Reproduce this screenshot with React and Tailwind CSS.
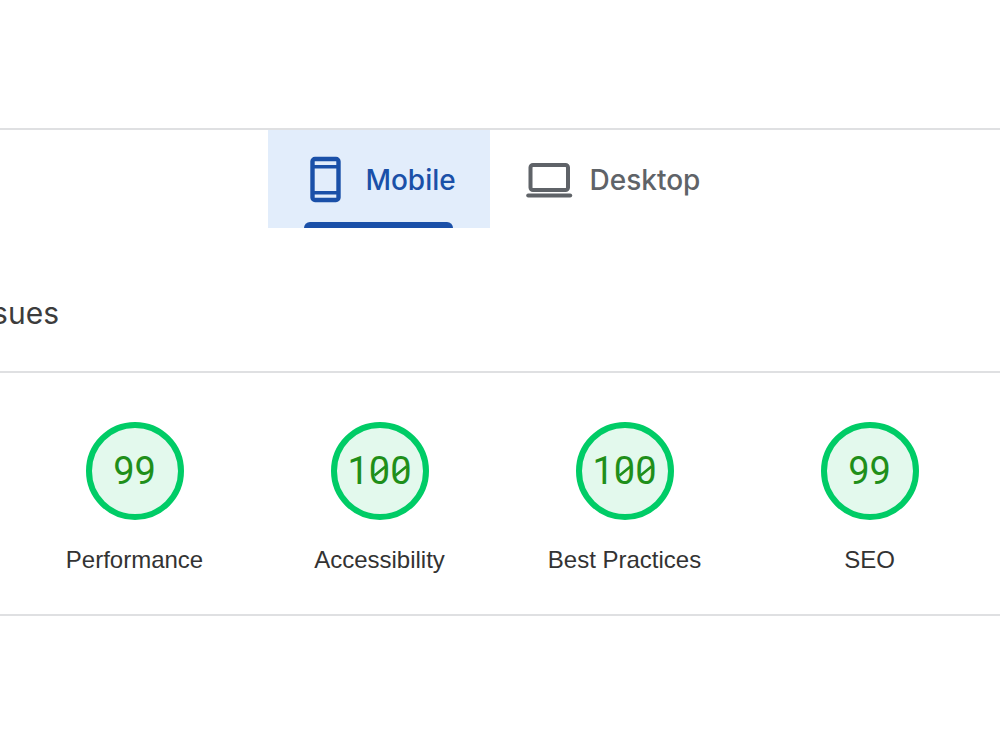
const scores = [
  { label: 'Performance', value: 99 },
  { label: 'Accessibility', value: 100 },
  { label: 'Best Practices', value: 100 },
  { label: 'SEO', value: 99 },
];

function PhoneIcon() {
  return (
    <svg className="h-12 w-8" viewBox="0 0 32 48" fill="none" stroke="currentColor" strokeWidth="4.4" aria-hidden="true">
      <rect x="3.5" y="3" width="26" height="41" rx="2.5" />
      <path d="M3.5 10.8h26M3.5 36.8h26" strokeWidth="3.6" />
    </svg>
  );
}

function LaptopIcon() {
  return (
    <svg className="h-12 w-12" viewBox="0 0 48 48" fill="none" stroke="currentColor" strokeWidth="4" aria-hidden="true">
      <rect x="4.5" y="9" width="37.5" height="25" rx="2.5" />
      <path d="M2.2 39.4h42" strokeWidth="4" strokeLinecap="round" />
    </svg>
  );
}

/* Strokes through the two zeros of a full score */
function ZeroSlashes() {
  return (
    <svg className="absolute inset-0 size-full" viewBox="0 0 86 86" fill="none" stroke="currentColor" strokeWidth="2.6" aria-hidden="true">
      <path d="M37.5 47.5 48.5 38.5M58.5 47.5 69.5 38.5" />
    </svg>
  );
}

function Gauge({ label, value }) {
  return (
    <a href={'#' + label} className="flex flex-col items-center gap-6">
      <span className="relative flex size-[98px] items-center justify-center rounded-full border-6 border-[#00cc66] bg-[#e3f9ed] font-['Roboto',sans-serif] text-[38px] text-[#1f8f1a]">
        {value}
        {value === 100 && <ZeroSlashes />}
      </span>
      <span className="font-['Liberation_Sans',sans-serif] text-2xl text-[#333]">{label}</span>
    </a>
  );
}

export default function App() {
  return (
    <main className="overflow-hidden bg-white pt-32 font-['Inter',sans-serif]">
      <div role="tablist" className="flex justify-center border-t-2 border-[#dfe0e2] pr-8">
        <button role="tab" aria-selected="true" className="flex w-[222px] flex-col items-center bg-[#e2edfb] text-[#1a50a8]">
          <span className="flex h-[92px] items-center gap-6 pt-2 pl-2">
            <PhoneIcon />
            <span className="text-[28px] font-medium">Mobile</span>
          </span>
          <span className="h-1.5 w-[149px] rounded-t-md bg-[#1a50a8]" />
        </button>
        <button role="tab" aria-selected="false" className="flex h-[92px] items-center gap-4 pt-2 pl-9 text-[#5f6368]">
          <LaptopIcon />
          <span className="text-[28px] font-medium">Desktop</span>
        </button>
      </div>
      <div className="flex h-[143px] w-[59px] items-center justify-end pt-[26px]">
        <h2 className="text-3xl whitespace-nowrap text-[#3c3c3c]">Diagnose performance issues</h2>
      </div>
      <section className="grid grid-cols-4 border-y-2 border-[#dfe0e2] pt-[49px] pr-2 pb-[38px] pl-3">
        {scores.map((s) => (
          <Gauge key={s.label} label={s.label} value={s.value} />
        ))}
      </section>
    </main>
  );
}
